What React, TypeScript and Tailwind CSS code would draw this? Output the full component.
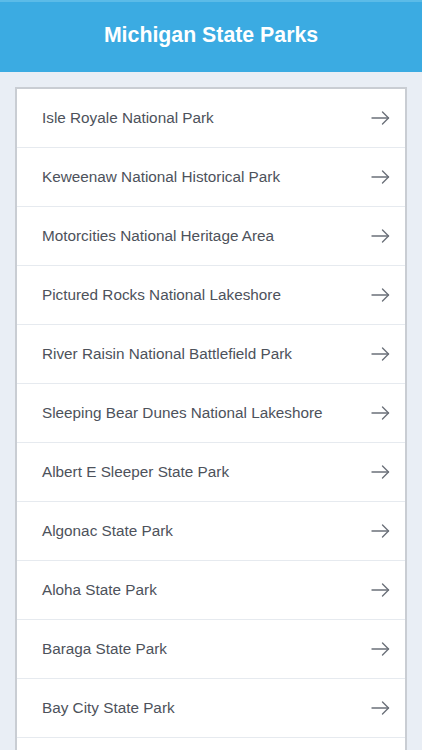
const parks = [
  "Isle Royale National Park",
  "Keweenaw National Historical Park",
  "Motorcities National Heritage Area",
  "Pictured Rocks National Lakeshore",
  "River Raisin National Battlefield Park",
  "Sleeping Bear Dunes National Lakeshore",
  "Albert E Sleeper State Park",
  "Algonac State Park",
  "Aloha State Park",
  "Baraga State Park",
  "Bay City State Park",
];

function Arrow() {
  return (
    <svg width="19" height="14" viewBox="0 0 19 14" fill="none" stroke="#6b7079" strokeWidth="1.4" strokeLinecap="round" strokeLinejoin="round">
      <path d="M1 7h16.5" />
      <path d="M11.5 1l6 6-6 6" />
    </svg>
  );
}

function App() {
  return (
    <div className="h-[750px] overflow-hidden bg-[#e9eef5] font-['Liberation_Sans',Arial,sans-serif]">
      <header className="h-[72px] border-t-2 border-[#5bbbe8] bg-[#3babe2] flex items-center justify-center pb-[2px]">
        <h1 className="text-[21.3px] font-bold text-white">Michigan State Parks</h1>
      </header>
      <div className="mx-[15px] mt-[15px] border-2 border-[#c9cdd3] border-b-0 bg-white">
        {parks.map((name) => (
          <div
            key={name}
            className="h-[59px] flex items-center justify-between pl-[25px] pr-[15px] border-b border-[#e6eaef]"
          >
            <span className="text-[15.3px] text-[#4d525b]">{name}</span>
            <Arrow />
          </div>
        ))}
        <div className="h-[59px]" />
      </div>
    </div>
  );
}

export default App;
